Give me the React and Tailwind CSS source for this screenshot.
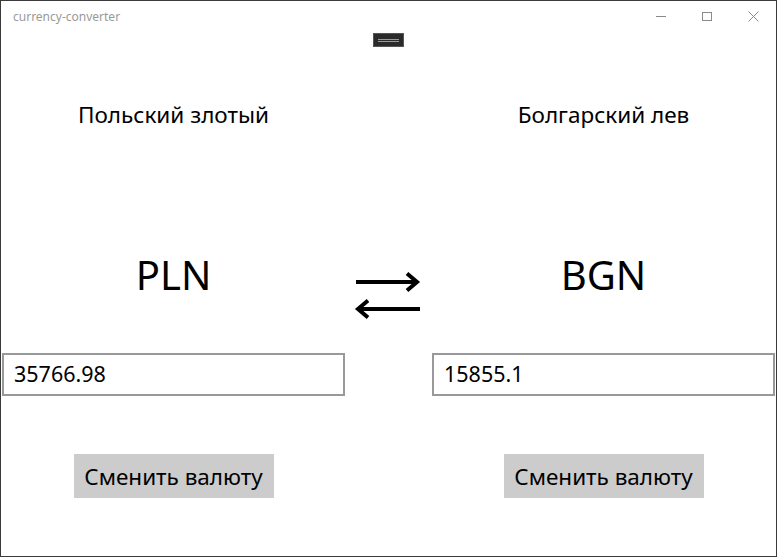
import React from "react";

function Arrows() {
  return (
    <svg width="70" height="50" viewBox="0 0 70 50" className="block">
      <g stroke="#000" strokeWidth="4" fill="none" strokeLinecap="butt" strokeLinejoin="miter">
        <line x1="3" y1="10" x2="65" y2="10" />
        <polyline points="54,1.5 64,10 54,18.5" />
        <line x1="5" y1="37" x2="67" y2="37" />
        <polyline points="15,28.5 5,37 15,45.5" />
      </g>
    </svg>
  );
}

function Column({ label, code, value }) {
  return (
    <div className="flex flex-col items-center">
      <div className="mt-[68px] h-[30px] flex items-center text-[22.5px] leading-[30px] text-black whitespace-nowrap">
        {label}
      </div>
      <div className="mt-[120px] h-[50px] flex items-center text-[40px] leading-[50px] text-black">
        {code}
      </div>
      <div className="mt-[53px] w-[343px] h-[43px] border-2 border-[#999999] flex items-center px-[10px] text-[21.5px] text-black bg-white">
        {value}
      </div>
      <div className="mt-[58px] w-[200px] h-[44px] bg-[#cccccc] flex items-center justify-center text-[22.5px] text-black whitespace-nowrap pt-[2px]">
        Сменить валюту
      </div>
    </div>
  );
}

export default function App() {
  return (
    <div
      className="relative w-[777px] h-[557px] border border-[#3a3a3a] bg-white flex flex-col overflow-hidden"
      style={{ fontFamily: '"Noto Sans", "Open Sans", sans-serif' }}
    >
      <div className="h-[31px] flex items-center shrink-0">
        <div className="pl-[12px] text-[12px] text-[#9a9a9a] flex-1">currency-converter</div>
        <div className="flex items-center h-full">
          <div className="w-[46px] h-full flex items-center justify-center">
            <div className="w-[10px] h-px bg-[#8a8a8a]" />
          </div>
          <div className="w-[46px] h-full flex items-center justify-center">
            <div className="w-[10px] h-[9px] border border-[#8a8a8a]" />
          </div>
          <div className="w-[46px] h-full flex items-center justify-center">
            <svg width="11" height="11" viewBox="0 0 11 11">
              <path d="M0.5 0.5 L10.5 10.5 M10.5 0.5 L0.5 10.5" stroke="#8a8a8a" strokeWidth="1" />
            </svg>
          </div>
        </div>
      </div>

      <div className="absolute left-[372px] top-[32px] w-[31px] h-[14px] bg-[#2b2b2b] border border-[#555555] flex flex-col items-center justify-center gap-[1px]">
        <div className="w-[21px] h-px bg-[#9a9a9a]" />
        <div className="w-[21px] h-px bg-[#9a9a9a]" />
      </div>

      <div className="flex-1 grid grid-cols-[343px_87px_343px] pl-[1px]">
        <Column label="Польский злотый" code="PLN" value="35766.98" />
        <div className="flex flex-col items-center">
          <div className="mt-[240px] ml-[-2px]">
            <Arrows />
          </div>
        </div>
        <Column label="Болгарский лев" code="BGN" value="15855.1" />
      </div>
    </div>
  );
}
